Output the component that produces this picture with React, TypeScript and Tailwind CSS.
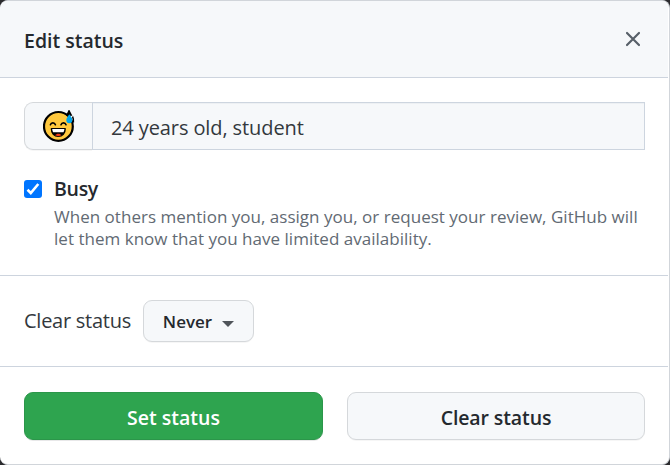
import React from 'react';

function SweatSmile() {
  return (
    <svg width="32" height="32" viewBox="0 0 32 32" aria-label="Grinning face with sweat">
      <circle cx="15.400" cy="16.400" r="14.400" fill="#ffc83d" stroke="#000" strokeWidth="2.200" />
      <path d="M26 .6l2.400 4.600h-4.600z" fill="#000" stroke="#000" strokeWidth="1.200" />
      <path d="M26.300 4.200c1.300 2 3 4.200 3 6a3 3 0 0 1-6 0c0-1.800 1.700-4 3-6z" fill="#00a6ed" />
      <path d="M29.600 6.500c.8 2 1 4.500.8 6" fill="none" stroke="#000" strokeWidth="1.500" />
      <g fill="none" stroke="#000" strokeWidth="1.600" strokeLinecap="round">
        <path d="M7.400 14.800c.8-2.600 4.200-2.600 5 0" />
        <path d="M18 14.800c.8-2.600 4.200-2.600 5 0" />
      </g>
      <path d="M8.500 18.700h13.600c0 4.700-2.800 7.500-6.800 7.500s-6.800-2.800-6.800-7.500z" fill="#000" stroke="#000" strokeWidth="1.600" strokeLinejoin="round" />
      <path d="M9.200 19h12.200c-.1 1.400-.4 2.400-.9 3.200H10.100c-.5-.8-.8-1.800-.9-3.200z" fill="#fff" />
      <path d="M12 25.300c1.600-2.100 5-2.100 6.600 0-2 1.100-4.600 1.100-6.600 0z" fill="#f03a17" />
    </svg>
  );
}

export default function App() {
  return (
    <div className="h-[465px] w-[670px] overflow-hidden bg-[#2b2b2e] font-['Open_Sans','Noto_Sans',sans-serif] text-[#24292e]">
      <div className="flex h-full flex-col overflow-hidden rounded-[8px] border-y border-r border-[#d1d5da] bg-white pr-px">
        <header className="flex h-[77px] shrink-0 items-center justify-between border-b border-[#cdd4de] bg-[#f6f8fa] pl-6 pr-[26px] pt-[3px]">
          <h3 className="text-[19.500px] leading-7 font-semibold">Edit status</h3>
          <button aria-label="Close" className="flex size-[18px] items-center justify-center pb-[3px]">
            <svg width="16" height="16" viewBox="0 0 16 16" fill="none" stroke="#586069" strokeWidth="2.200" strokeLinecap="round">
              <path d="M2 2l12 12M14 2L2 14" />
            </svg>
          </button>
        </header>

        <section className="h-[198px] shrink-0 border-b border-[#cdd4de] pl-6 pr-[23px] pt-6">
          <div className="flex h-12">
            <button className="flex w-[68px] items-center justify-center rounded-l-[9px] border border-r-0 border-[#d5d8db] bg-[#f6f8fa] shadow-[0_1px_0_rgba(27,31,35,0.04)]">
              <SweatSmile />
            </button>
            <div className="flex flex-1 items-center border border-[#cdd5df] bg-[#f6f8fa] pl-[18px] pt-[3px] text-[20px] tracking-[-0.1px] text-[#33383d] shadow-[inset_0_1px_0_rgba(225,228,232,0.4)]">
              24 years old, student
            </div>
          </div>
          <div className="mt-[26px] flex gap-3">
            <span className="mt-1 flex size-[18px] shrink-0 items-center justify-center rounded-[3px] bg-[#0075ff]">
              <svg width="14" height="14" viewBox="0 0 14 14" fill="none" stroke="#fff" strokeWidth="2.600">
                <path d="M1.500 7.800l3.300 3.200L12.300 2" />
              </svg>
            </span>
            <div>
              <div className="mb-1 text-[19.500px] leading-[26px] font-semibold tracking-[-0.3px]">Busy</div>
              <p className="whitespace-nowrap text-[17px] leading-[22px] tracking-[0.020px] text-[#626a73]">
                When others mention you, assign you, or request your review, GitHub will<br />
                let them know that you have limited availability.
              </p>
            </div>
          </div>
        </section>

        <section className="flex h-[91px] shrink-0 items-center gap-3 border-b border-[#cdd4de] pl-6">
          <span className="w-[107px] whitespace-nowrap text-[20px] tracking-[-0.260px] text-[#33383d]">Clear status</span>
          <button className="flex h-[42px] w-[111px] items-center justify-center gap-[10px] rounded-[9px] border border-[#d5d8db] bg-[#f6f8fa] pt-px text-[17px] font-semibold shadow-[0_1px_0_rgba(27,31,35,0.04)]">
            Never
            <svg width="12" height="6" viewBox="0 0 12 6" className="mt-1"><path d="M0 0h12L6 6z" fill="#50555a" /></svg>
          </button>
        </section>

        <footer className="flex gap-6 pl-6 pr-[23px] pt-[25px]">
          <button className="h-12 w-[299px] rounded-[9px] border border-[#2b964a] bg-[#2ea44f] pt-[3px] text-[19.500px] font-semibold text-white shadow-[0_1px_0_rgba(27,31,35,0.1)]">Set status</button>
          <button className="h-12 flex-1 rounded-[9px] border border-[#d5d8db] bg-[#f6f8fa] pt-[3px] text-[19.500px] font-semibold tracking-[-0.1px] shadow-[0_1px_0_rgba(27,31,35,0.04)]">Clear status</button>
        </footer>
      </div>
    </div>
  );
}
